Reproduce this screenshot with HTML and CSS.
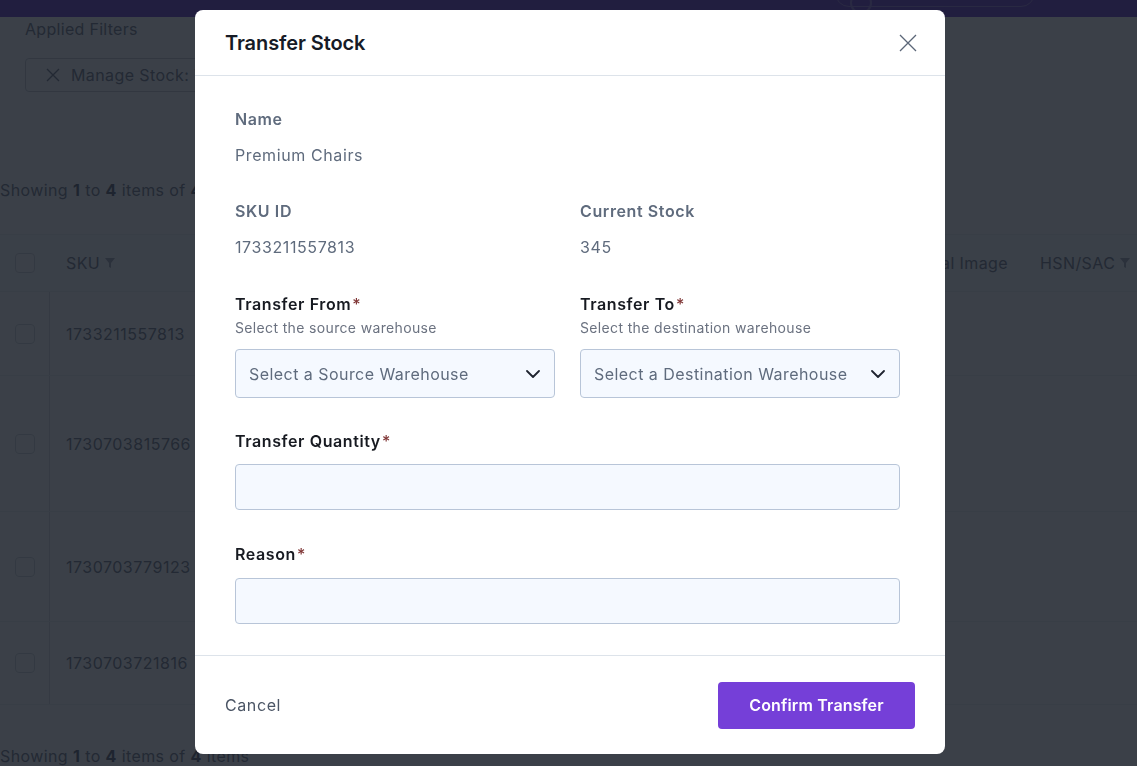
FILE: index.html
```html
<!DOCTYPE html>
<html lang="en">
<head>
<meta charset="utf-8">
<title>Transfer Stock</title>
<link rel="stylesheet" href="styles.css">
</head>
<body>
<div class="page">
  <header class="topbar">
    <div class="topbar-pill"><span class="pill-dot"></span></div>
  </header>
  <main class="content">
    <div class="filters">
      <div class="filters-title">Applied Filters</div>
      <div class="chip">
        <svg class="chip-x" width="16" height="16" viewBox="0 0 16 16"><path d="M2 2L14 14M14 2L2 14" stroke="currentColor" stroke-width="1.4" fill="none"/></svg>
        <span>Manage Stock: Transfer</span>
      </div>
    </div>
    <div class="showing">Showing <b>1</b> to <b>4</b> items of <b>4</b> items</div>
    <div class="table">
      <div class="thead">
        <div class="cell-check"><span class="checkbox"></span></div>
        <div class="th sku">SKU <svg class="funnel" width="10" height="10" viewBox="0 0 10 10"><path d="M0 0H10L6 5V10L4 9V5Z" fill="currentColor"/></svg></div>
        <div class="th spacer"></div>
        <div class="th img">Original Image</div>
        <div class="th hsn">HSN/SAC <svg class="funnel" width="10" height="10" viewBox="0 0 10 10"><path d="M0 0H10L6 5V10L4 9V5Z" fill="currentColor"/></svg></div>
      </div>
      <div class="tr r1"><div class="cell-check"><span class="checkbox"></span></div><div class="td">1733211557813</div></div>
      <div class="tr r2"><div class="cell-check"><span class="checkbox"></span></div><div class="td">1730703815766</div></div>
      <div class="tr r3"><div class="cell-check"><span class="checkbox"></span></div><div class="td">1730703779123</div></div>
      <div class="tr r4"><div class="cell-check"><span class="checkbox"></span></div><div class="td">1730703721816</div></div>
    </div>
    <div class="showing bottom">Showing <b>1</b> to <b>4</b> items of <b>4</b> items</div>
  </main>
</div>

<div class="overlay"></div>

<div class="modal" role="dialog" aria-labelledby="modal-title">
  <div class="modal-header">
    <h2 id="modal-title" class="modal-title">Transfer Stock</h2>
    <button class="close-btn" aria-label="Close">
      <svg width="18" height="18" viewBox="0 0 18 18"><path d="M1 1L17 17M17 1L1 17" stroke="currentColor" stroke-width="1.3" fill="none"/></svg>
    </button>
  </div>
  <div class="modal-body">
    <div class="info">
      <div class="info-label">Name</div>
      <div class="info-value">Premium Chairs</div>
    </div>
    <div class="grid2 info-row">
      <div class="info">
        <div class="info-label">SKU ID</div>
        <div class="info-value">1733211557813</div>
      </div>
      <div class="info">
        <div class="info-label">Current Stock</div>
        <div class="info-value">345</div>
      </div>
    </div>
    <div class="grid2 field-row">
      <div class="field">
        <div class="field-label">Transfer From<span class="req">*</span></div>
        <div class="field-hint">Select the source warehouse</div>
        <div class="select">
          <span>Select a Source Warehouse</span>
          <svg class="chev" width="14" height="8" viewBox="0 0 14 8"><path d="M1 1L7 7L13 1" stroke="currentColor" stroke-width="1.8" fill="none" stroke-linecap="round" stroke-linejoin="round"/></svg>
        </div>
      </div>
      <div class="field">
        <div class="field-label">Transfer To<span class="req">*</span></div>
        <div class="field-hint">Select the destination warehouse</div>
        <div class="select">
          <span>Select a Destination Warehouse</span>
          <svg class="chev" width="14" height="8" viewBox="0 0 14 8"><path d="M1 1L7 7L13 1" stroke="currentColor" stroke-width="1.8" fill="none" stroke-linecap="round" stroke-linejoin="round"/></svg>
        </div>
      </div>
    </div>
    <div class="field wide">
      <div class="field-label">Transfer Quantity<span class="req">*</span></div>
      <div class="input"></div>
    </div>
    <div class="field wide">
      <div class="field-label">Reason<span class="req">*</span></div>
      <div class="input"></div>
    </div>
  </div>
  <div class="modal-footer">
    <button class="btn-cancel">Cancel</button>
    <button class="btn-primary">Confirm Transfer</button>
  </div>
</div>
</body>
</html>
```

FILE: styles.css
```css
* { box-sizing: border-box; }

html, body {
  margin: 0;
  padding: 0;
  width: 1137px;
  height: 766px;
  overflow: hidden;
  font-family: Inter, "Noto Sans", "Liberation Sans", sans-serif;
  background: #ffffff;
}

.page {
  width: 1137px;
  height: 766px;
  background: #ffffff;
  color: #6b7280;
}

.topbar {
  height: 17px;
  background: #612fc8;
  display: flex;
  justify-content: flex-end;
  padding-right: 102px;
}

.topbar-pill {
  width: 200px;
  height: 24px;
  margin-top: -17px;
  border: 1px solid #8f73d8;
  border-radius: 0 0 14px 14px;
  position: relative;
}

.pill-dot {
  position: absolute;
  left: 14px;
  top: 8px;
  width: 22px;
  height: 22px;
  border-radius: 50%;
  border: 2px solid #8f73d8;
}

.content {
  padding-top: 2px;
}

.filters {
  padding-left: 25px;
}

.filters-title {
  font-size: 16px;
  line-height: 20px;
  letter-spacing: 0.3px;
  color: #6b7280;
}

.chip {
  margin-top: 19px;
  height: 34px;
  width: 260px;
  border: 1px solid #c4c8ce;
  border-radius: 4px;
  display: flex;
  align-items: center;
  gap: 10px;
  padding-left: 19px;
  font-size: 16px;
  letter-spacing: 0.4px;
  color: #6b7280;
}

.chip-x { color: #6b7280; }

.showing {
  margin-top: 87px;
  font-size: 16px;
  line-height: 22px;
  letter-spacing: 0.4px;
  color: #6b7280;
}

.showing b { font-weight: 700; color: #4b5563; }

.showing.bottom {
  margin-top: 40px;
}

.table {
  margin-top: 33px;
}

.thead {
  height: 58px;
  display: flex;
  align-items: center;
  background: #f9fafb;
  border-top: 1px solid #eceef1;
  border-bottom: 1px solid #eceef1;
}

.cell-check {
  width: 50px;
  height: 100%;
  display: flex;
  align-items: center;
  justify-content: center;
  flex: none;
}

.tr .cell-check {
  border-right: 1px solid #d8dbe0;
}

.checkbox {
  width: 20px;
  height: 20px;
  border: 1px solid #cfd3d9;
  border-radius: 4px;
  background: #fff;
}

.th {
  font-size: 16px;
  letter-spacing: 0.4px;
  color: #6b7280;
  display: flex;
  align-items: center;
  gap: 5px;
}

.th.sku { padding-left: 16px; width: 250px; }
.th.spacer { flex: 1; }
.th.img { width: 150px; padding-right: 32px; justify-content: flex-end; }
.th.hsn { width: 97px; }

.funnel { color: #9ca3af; }

.tr {
  display: flex;
  align-items: center;
  border-bottom: 1px solid #eceef1;
}

.tr.r1 { height: 84px; }
.tr.r2 { height: 136px; }
.tr.r3 { height: 110px; }
.tr.r4 { height: 83px; }

.td {
  padding-left: 16px;
  font-size: 16px;
  letter-spacing: 0.5px;
  color: #6b7280;
}

.overlay {
  position: fixed;
  inset: 0;
  background: rgba(22, 28, 37, 0.84);
}

.modal {
  position: fixed;
  left: 195px;
  top: 10px;
  width: 750px;
  height: 744px;
  background: #ffffff;
  border-radius: 8px;
  display: flex;
  flex-direction: column;
}

.modal-header {
  height: 66px;
  flex: none;
  display: flex;
  align-items: center;
  justify-content: space-between;
  padding: 0 28px 0 30px;
  border-bottom: 1px solid #dde3ea;
}

.modal-title {
  margin: 0;
  font-size: 20px;
  font-weight: 600;
  color: #161b26;
  letter-spacing: -0.1px;
}

.close-btn {
  border: 0;
  background: none;
  padding: 0;
  width: 18px;
  height: 18px;
  color: #5b6678;
  display: flex;
}

.modal-body {
  flex: 1;
  padding: 33px 45px 0 40px;
  display: flex;
  flex-direction: column;
}

.grid2 {
  display: grid;
  grid-template-columns: 320px 320px;
  column-gap: 25px;
}

.info-label {
  font-size: 16px;
  font-weight: 600;
  line-height: 20px;
  letter-spacing: 0.6px;
  color: #5f6b7d;
}

.info-value {
  margin-top: 14px;
  font-size: 16px;
  line-height: 24px;
  letter-spacing: 0.6px;
  color: #5f6b7d;
}

.info-row { margin-top: 34px; }
.field-row { margin-top: 35px; }

.field-label {
  font-size: 16px;
  font-weight: 600;
  line-height: 20px;
  letter-spacing: 0.6px;
  color: #171a21;
}

.req {
  color: #7f3535;
  font-weight: 500;
  margin-left: 1px;
}

.field-hint {
  margin-top: 5px;
  font-size: 14px;
  line-height: 18px;
  letter-spacing: 0.35px;
  color: #6b7280;
}

.select {
  margin-top: 12px;
  height: 49px;
  border: 1px solid #b8c5d8;
  border-radius: 4px;
  background: #f5f9ff;
  display: flex;
  align-items: center;
  justify-content: space-between;
  padding: 0 14px 0 13px;
  font-size: 16px;
  letter-spacing: 0.45px;
  color: #5f6b7d;
}

.chev { color: #1f2430; }

.field.wide {
  margin-top: 33px;
  width: 665px;
}

.field.wide + .field.wide {
  margin-top: 34px;
}

.input {
  margin-top: 13px;
  height: 46px;
  border: 1px solid #b8c5d8;
  border-radius: 4px;
  background: #f5f9ff;
}

.field.wide + .field.wide .input {
  margin-top: 14px;
}

.modal-footer {
  height: 99px;
  flex: none;
  border-top: 1px solid #dde3ea;
  display: flex;
  align-items: center;
  justify-content: space-between;
  padding: 0 30px;
}

.btn-cancel {
  border: 0;
  background: none;
  padding: 0;
  font-family: inherit;
  font-size: 16px;
  letter-spacing: 0.6px;
  color: #4b5565;
}

.btn-primary {
  width: 197px;
  height: 47px;
  border: 0;
  border-radius: 4px;
  background: #753fd8;
  color: #ffffff;
  font-family: inherit;
  font-size: 16px;
  font-weight: 600;
  letter-spacing: 0.15px;
}
```
